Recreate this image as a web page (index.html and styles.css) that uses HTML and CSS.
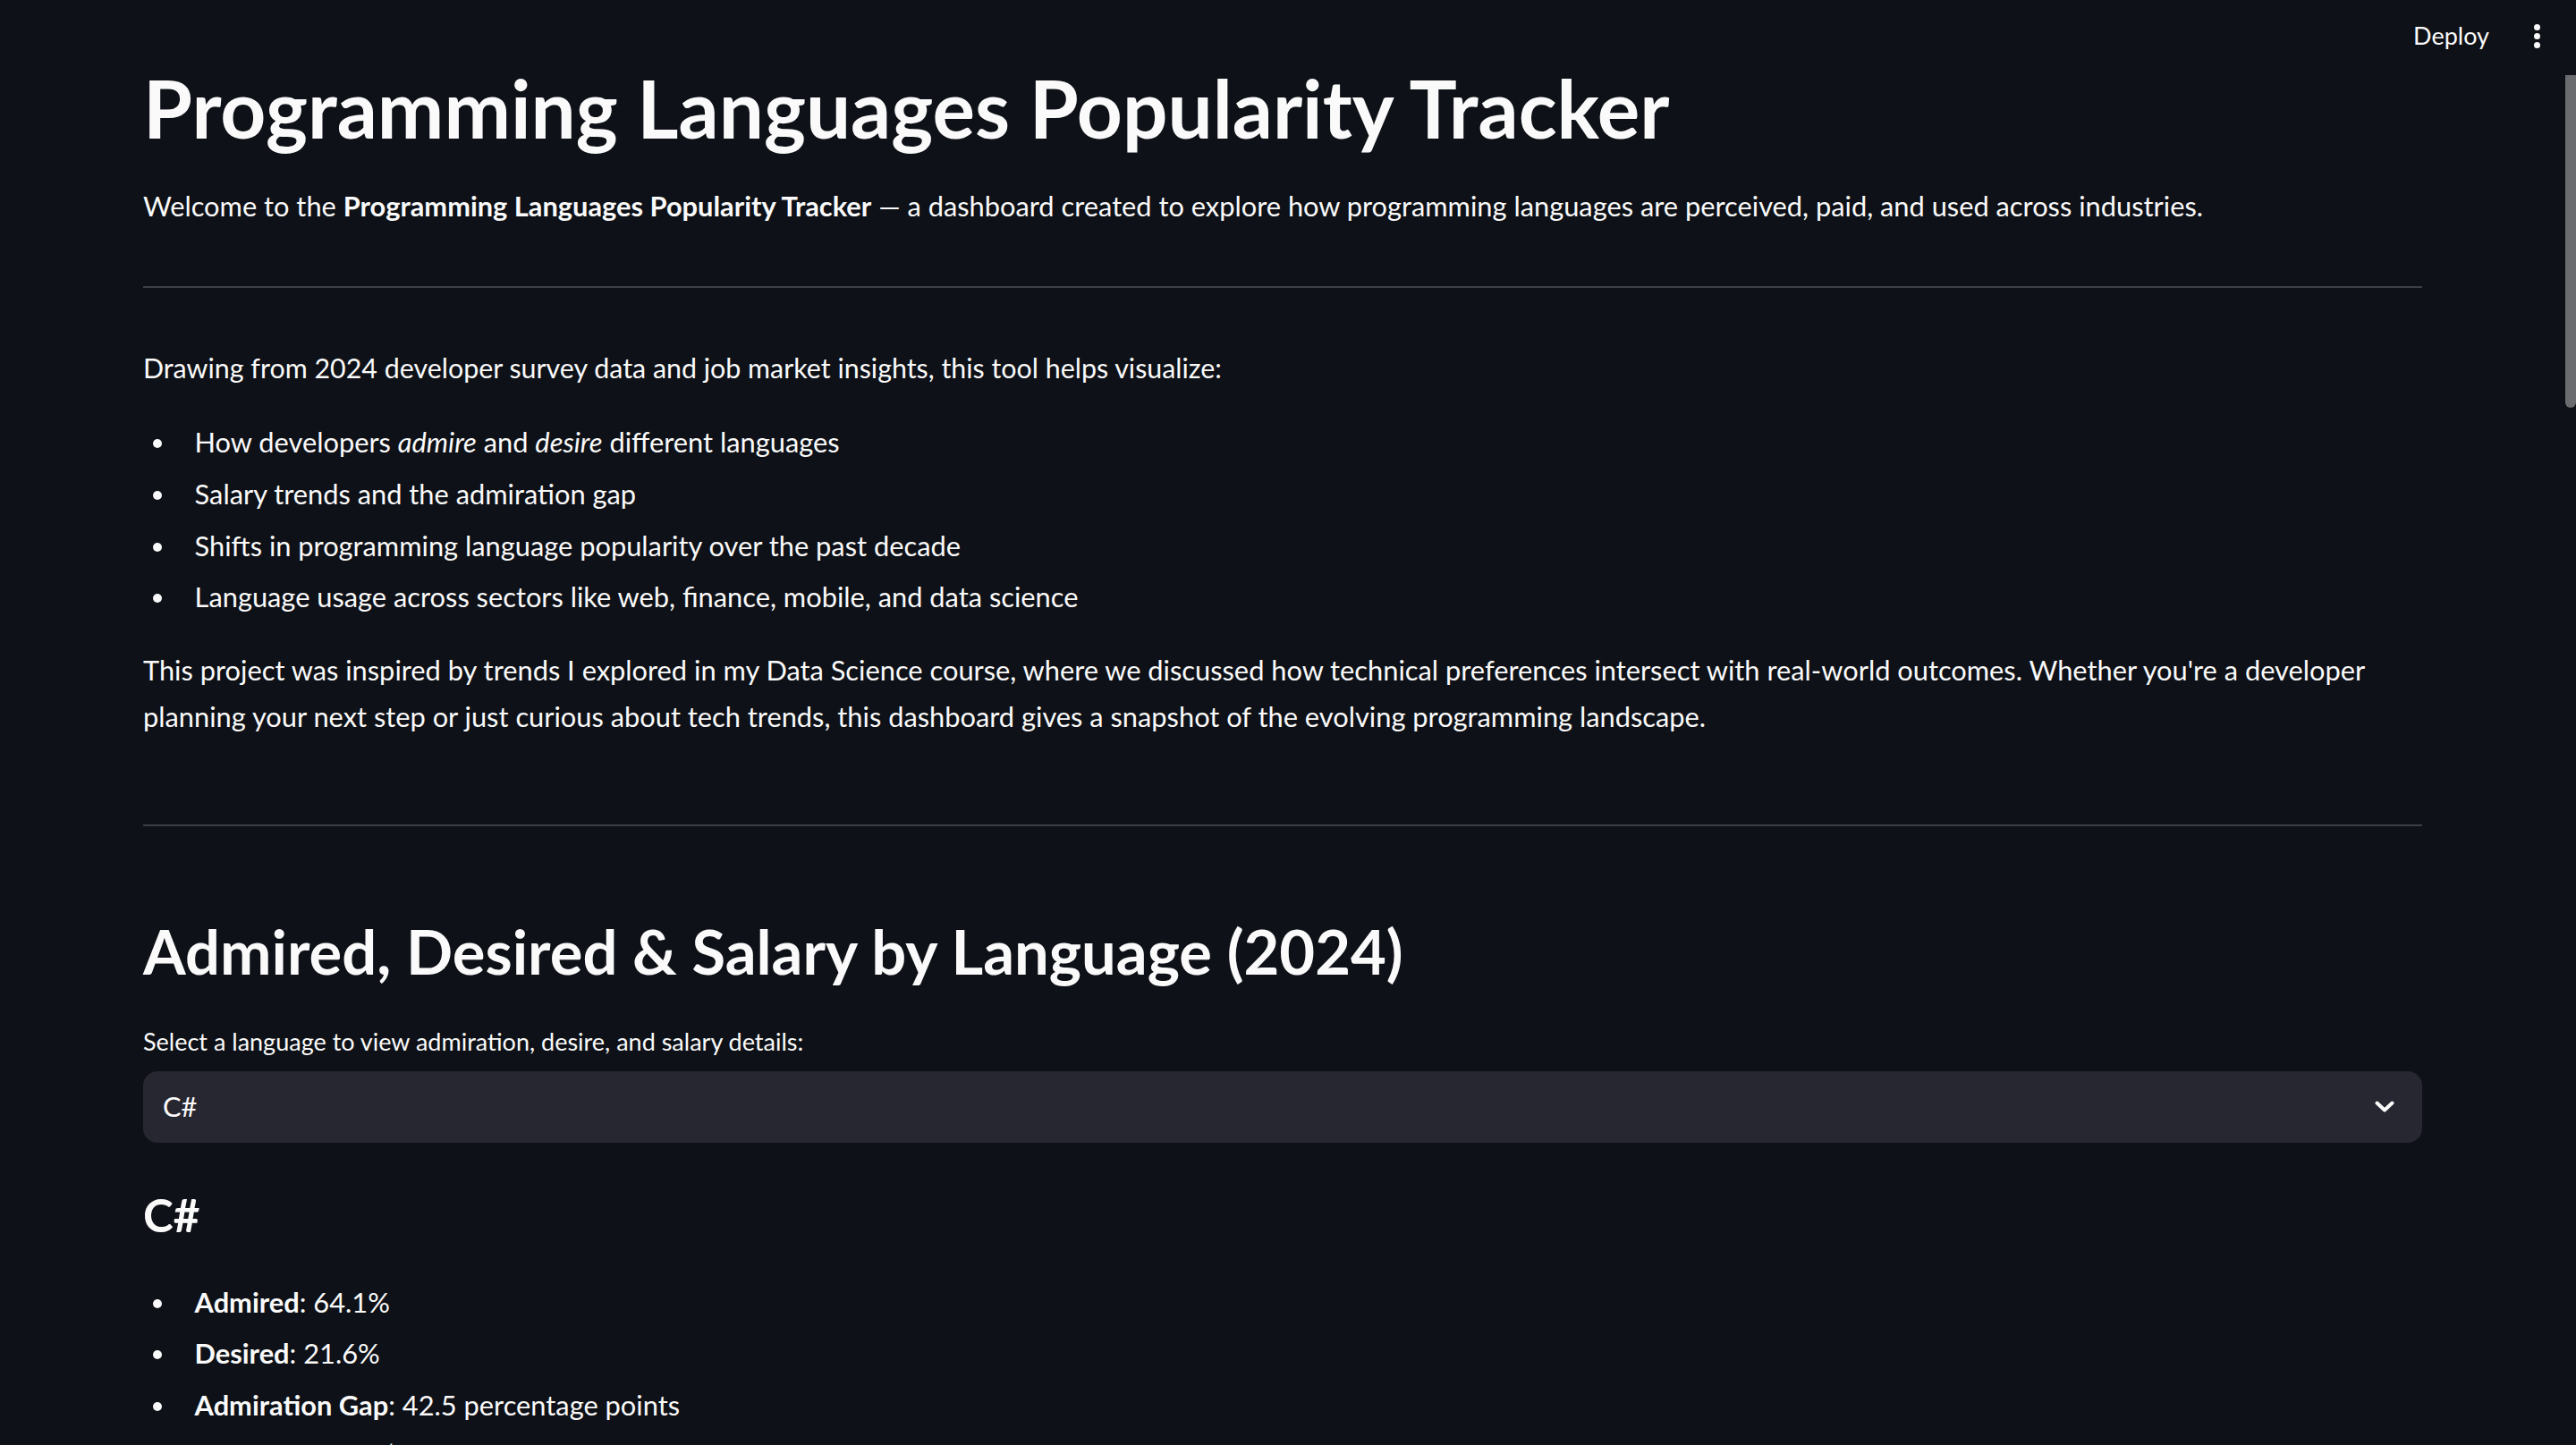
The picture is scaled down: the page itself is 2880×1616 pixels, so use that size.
FILE: index.html
```
<!DOCTYPE html>
<html lang="en">
<head>
<meta charset="utf-8">
<title>Programming Languages Popularity Tracker</title>
<link rel="stylesheet" href="styles.css">
</head>
<body>
<header class="app-header">
  <span class="deploy">Deploy</span>
  <span class="kebab"><i></i><i></i><i></i></span>
</header>
<div class="scroll-thumb"></div>
<main class="main">
  <h1 class="title">Programming Languages Popularity Tracker</h1>
  <p class="intro">Welcome to the <strong>Programming Languages Popularity Tracker</strong> — a dashboard created to explore how programming languages are perceived, paid, and used across industries.</p>
  <hr class="rule">
  <p class="lead">Drawing from 2024 developer survey data and job market insights, this tool helps visualize:</p>
  <ul class="list">
    <li>How developers <em>admire</em> and <em>desire</em> different languages</li>
    <li>Salary trends and the admiration gap</li>
    <li>Shifts in programming language popularity over the past decade</li>
    <li>Language usage across sectors like web, finance, mobile, and data science</li>
  </ul>
  <p class="para">This project was inspired by trends I explored in my Data Science course, where we discussed how technical preferences intersect with real-world outcomes. Whether you're a developer planning your next step or just curious about tech trends, this dashboard gives a snapshot of the evolving programming landscape.</p>
  <hr class="rule rule-lower">
  <h2 class="section">Admired, Desired &amp; Salary by Language (2024)</h2>
  <label class="label">Select a language to view admiration, desire, and salary details:</label>
  <div class="select">
    <span class="select-value">C#</span>
    <svg class="chevron" width="22" height="14" viewBox="0 0 22 14"><path d="M2.5 2.5 L11 10.5 L19.5 2.5" fill="none" stroke="#fafafa" stroke-width="4" stroke-linecap="round" stroke-linejoin="round"/></svg>
  </div>
  <h3 class="lang">C#</h3>
  <ul class="list stats">
    <li><strong>Admired</strong>: 64.1%</li>
    <li><strong>Desired</strong>: 21.6%</li>
    <li><strong>Admiration Gap</strong>: 42.5 percentage points</li>
    <li><strong>Median Salary</strong>: $75,000</li>
  </ul>
</main>
</body>
</html>
```
FILE: styles.css
```
html, body {
  margin: 0;
  padding: 0;
  background: #0e1117;
  color: #fafafa;
  font-family: "Source Sans Pro", Lato, sans-serif;
  overflow: hidden;
  height: 1616px;
}

.app-header {
  position: absolute;
  top: 0;
  right: 0;
  height: 80px;
  display: flex;
  align-items: center;
  padding-right: 40px;
}

.deploy {
  font-size: 27px;
  color: #fafafa;
  margin-right: 50px;
  margin-top: -1px;
}

.kebab {
  display: flex;
  flex-direction: column;
  gap: 3px;
}

.kebab i {
  display: block;
  width: 7px;
  height: 7px;
  border-radius: 50%;
  background: #fafafa;
}

.scroll-thumb {
  position: absolute;
  top: 84px;
  right: 0;
  width: 12px;
  height: 372px;
  background: #6b6c70;
  border-radius: 0 0 6px 6px;
}

.main {
  width: 2548px;
  margin-left: 160px;
  padding-top: 68px;
}

.title {
  margin: 0;
  font-size: 89px;
  font-weight: 700;
  line-height: 106px;
}

.intro {
  margin: 31px 0 0;
  font-size: 30.8px;
  line-height: 51.2px;
}

.rule {
  margin: 64px 0 0;
  border: 0;
  height: 2px;
  background: rgba(250, 250, 250, 0.2);
}

.lead {
  margin: 64px 0 0;
  font-size: 30.4px;
  line-height: 51.2px;
}

.list {
  list-style: disc;
  margin: 32px 0 0;
  padding: 0;
  font-size: 30.8px;
  line-height: 51.2px;
}

.list li {
  margin: 6.4px 0 6.4px 38.4px;
  padding-left: 19.2px;
}

.list li:first-child { margin-top: 0; }

.para {
  margin: 31px 0 0;
  font-size: 30.8px;
  line-height: 51.2px;
}

.rule-lower {
  margin-top: 95px;
}

.section {
  margin: 97px 0 0;
  font-size: 68.7px;
  font-weight: 700;
  line-height: 86px;
}

.label {
  display: block;
  margin-top: 36px;
  font-size: 27px;
  line-height: 44.8px;
}

.select {
  margin-top: 10px;
  height: 80px;
  background: #262730;
  border-radius: 16px;
  display: flex;
  align-items: center;
  justify-content: space-between;
  padding: 0 31px 0 22px;
}

.select-value {
  font-size: 30.8px;
}

.lang {
  margin: 47px 0 0;
  font-size: 51px;
  font-weight: 700;
  line-height: 67px;
}

.stats {
  margin-top: 39px;
}
```
